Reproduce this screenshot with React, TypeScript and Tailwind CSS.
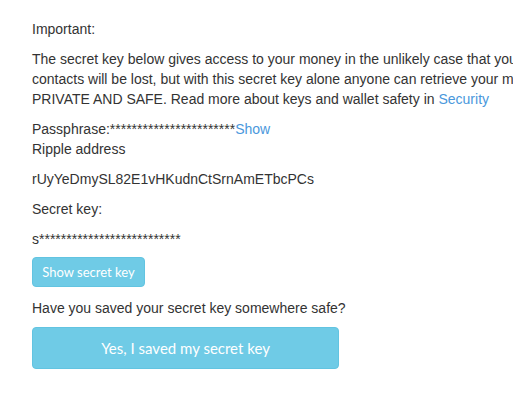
const SANS = "font-['Liberation_Sans','Helvetica_Neue',Arial,sans-serif]";
const BTN = "font-['Lato','Open_Sans',sans-serif]";

export default function App() {
  return (
    <div className={`w-[513px] h-[403px] overflow-hidden bg-white text-[#333333] text-[14px] leading-[20px] ${SANS}`}>
      <div className="pl-[32px] pt-[19px]">
        <p className="mb-[10px]">Important:</p>
        <p className="mb-[10px] whitespace-nowrap">
          The secret key below gives access to your money in the unlikely case that you lose your passphrase. Your money and
          <br />
          contacts will be lost, but with this secret key alone anyone can retrieve your money, so keep it
          <br />
          PRIVATE AND SAFE. Read more about keys and wallet safety in{' '}
          <a className="text-[#4a98dc]">Security</a>
        </p>
        <p className="whitespace-nowrap">
          Passphrase:{'*'.repeat(23)}
          <a className="text-[#4a98dc]">Show</a>
        </p>
        <p className="mb-[10px]">Ripple address</p>
        <p className="mb-[10px]">rUyYeDmySL82E1vHKudnCtSrnAmETbcPCs</p>
        <p className="mb-[10px]">Secret key:</p>
        <p className="mb-[8px]">s{'*'.repeat(26)}</p>
        <button
          type="button"
          className={`h-[30px] w-[113px] rounded-[4px] border border-[#62c4e1] bg-[#6fcbe6] text-[13px] text-white ${BTN}`}
        >
          Show secret key
        </button>
        <p className="mt-[11px] mb-[9px]">Have you saved your secret key somewhere safe?</p>
        <button
          type="button"
          className={`h-[42px] w-[307px] rounded-[4px] border border-[#62c4e1] bg-[#6fcbe6] text-[15px] text-white ${BTN}`}
        >
          Yes, I saved my secret key
        </button>
      </div>
    </div>
  );
}
